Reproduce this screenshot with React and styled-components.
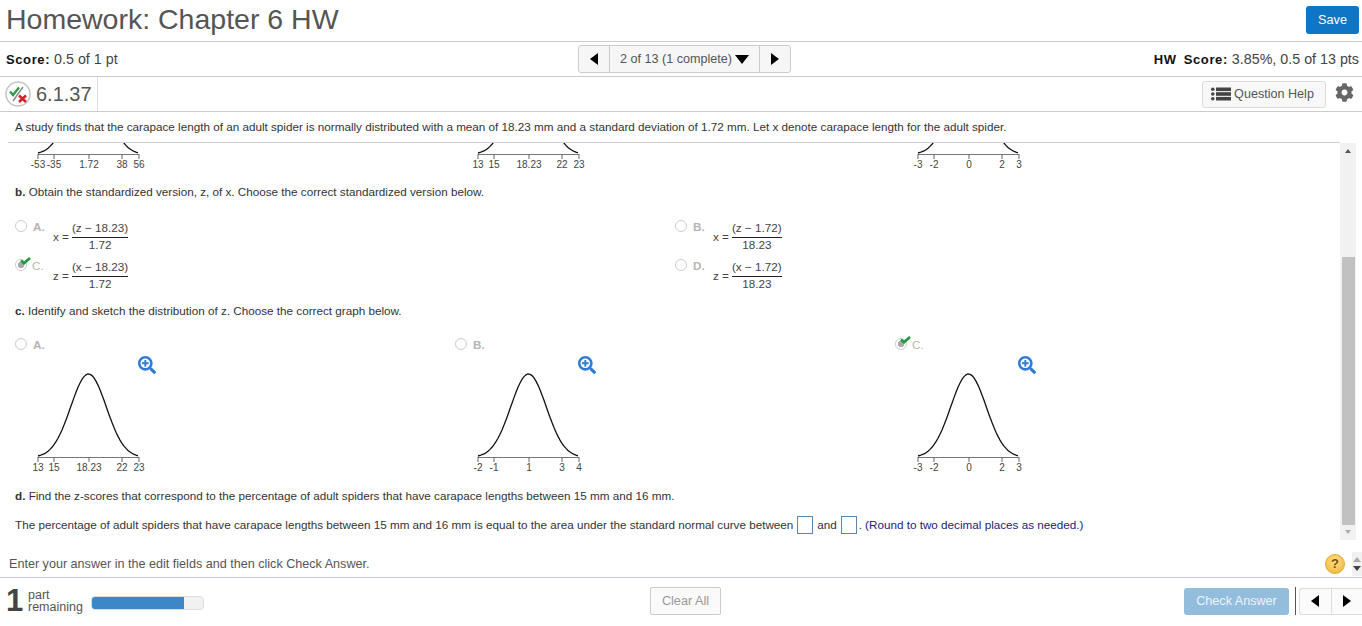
import React from "react";
import styled, { createGlobalStyle } from "styled-components";
import { FaCog, FaSearchPlus } from "react-icons/fa";

const GlobalStyle = createGlobalStyle`
    html, body {
        margin: 0;
        padding: 0;
        background: #fff;
    }
    body {
        font-family: "Liberation Sans", Arial, sans-serif;
        font-size: 11.7px;
        color: #333;
    }
    * {
        box-sizing: border-box;
    }
`;

const TICKS = [38, 54, 89, 122, 139];

// bell curve for the sketches, in page-like coordinates
const curvePath = () => {
    const points = [];
    for (let x = 38; x <= 139; x += 2) {
        const z = (x - 88.5) / 17.8;
        const y = 457.5 - 83.5 * Math.exp((-z * z) / 2);
        points.push(`${x} ${y.toFixed(1)}`);
    }
    return "M" + points.join(" L");
};

const Sketch = ({ labels }) => (
    <GraphSvg viewBox="30 368 122 106" width="122" height="106">
        <path d={curvePath()} fill="none" stroke="#111" strokeWidth="1.3" />
        <line x1="38" x2="139" y1="457.5" y2="457.5" stroke="#777" strokeWidth="1.2" />
        {TICKS.map((x, i) => (
            <g key={x}>
                <line x1={x} x2={x} y1="457" y2="462" stroke="#666" strokeWidth="1" />
                <text x={x} y="471" textAnchor="middle" fontSize="10" fill="#444">
                    {labels[i]}
                </text>
            </g>
        ))}
    </GraphSvg>
);

const Fraction = ({ name, top, bottom }) => (
    <Formula>
        <span>{name} =</span>
        <Frac>
            <Numerator>{top}</Numerator>
            <Denominator>{bottom}</Denominator>
        </Frac>
    </Formula>
);

const Choice = ({ letter, picked }) => (
    <ChoiceLabel>
        <Radio $picked={picked} />
        {picked && (
            <CheckMark viewBox="0 0 11 8" width="11" height="8">
                <path d="M1 3.5 L4 6.3 L10 1" fill="none" stroke="#1f9a3c" strokeWidth="2.6" />
            </CheckMark>
        )}
        <LetterText $picked={picked}>{letter}.</LetterText>
    </ChoiceLabel>
);

const QuestionStatus = () => (
    <svg viewBox="0 0 26 26" width="26" height="26">
        <circle cx="13" cy="13" r="12" fill="#fff" stroke="#c4c4c4" strokeWidth="1.5" />
        <line x1="8" y1="20" x2="18" y2="6" stroke="#888" strokeWidth="1.4" />
        <path d="M5 10.5 L8 14 L14 6.5" fill="none" stroke="#2f9e48" strokeWidth="2.4" />
        <path d="M14 14.5 L21 21 M21 14.5 L14 21" stroke="#d3222a" strokeWidth="2.6" />
    </svg>
);

const ListIcon = () => (
    <svg viewBox="0 0 20 14" width="20" height="14">
        <g fill="#444">
            <rect x="5" y="0.5" width="15" height="3.6" />
            <rect x="5" y="5.2" width="15" height="3.6" />
            <rect x="5" y="9.9" width="15" height="3.6" />
            <circle cx="1.8" cy="2.3" r="1.8" />
            <circle cx="1.8" cy="7" r="1.8" />
            <circle cx="1.8" cy="11.7" r="1.8" />
        </g>
    </svg>
);

const App = () => {
    return (
        <Page>
            <GlobalStyle />
            <TitleBar>
                <Title>Homework: Chapter 6 HW</Title>
                <SaveButton>Save</SaveButton>
            </TitleBar>

            <ScoreBar>
                <ScoreText>
                    <b>Score:</b> 0.5 of 1 pt
                </ScoreText>
                <Pager>
                    <PagerArrow>
                        <Arrow $dir="left" $size={6.5} />
                    </PagerArrow>
                    <PagerMiddle>
                        2 of 13 (1 complete)
                        <Arrow $dir="down" $size={7} />
                    </PagerMiddle>
                    <PagerArrow>
                        <Arrow $dir="right" $size={6.5} />
                    </PagerArrow>
                </Pager>
                <HwScore>
                    <b>HW Score:</b> 3.85%, 0.5 of 13 pts
                </HwScore>
            </ScoreBar>

            <QuestionBar>
                <QuestionId>
                    <QuestionStatus />
                    <QuestionNumber>6.1.37</QuestionNumber>
                </QuestionId>
                <HelpButton>
                    <ListIcon />
                    Question Help
                </HelpButton>
                <GearSlot>
                    <FaCog size={19} color="#666" />
                </GearSlot>
            </QuestionBar>

            <Prompt>
                A study finds that the carapace length of an adult spider is normally distributed with a mean of 18.23 mm and a standard deviation of 1.72 mm. Let x denote carapace length for the adult spider.
            </Prompt>

            <ScrollArea>
                <ScrollContent>
                    <GraphGrid>
                        <CroppedGraph>
                            <Sketch labels={["-53", "-35", "1.72", "38", "56"]} />
                        </CroppedGraph>
                        <CroppedGraph>
                            <Sketch labels={["13", "15", "18.23", "22", "23"]} />
                        </CroppedGraph>
                        <CroppedGraph>
                            <Sketch labels={["-3", "-2", "0", "2", "3"]} />
                        </CroppedGraph>
                    </GraphGrid>

                    <PartHeading $top={14}>
                        <b>b.</b> Obtain the standardized version, z, of x. Choose the correct standardized version below.
                    </PartHeading>

                    <FormulaGrid>
                        <FormulaOption>
                            <Choice letter="A" />
                            <Fraction name="x" top="(z − 18.23)" bottom="1.72" />
                        </FormulaOption>
                        <FormulaOption>
                            <Choice letter="B" />
                            <Fraction name="x" top="(z − 1.72)" bottom="18.23" />
                        </FormulaOption>
                        <FormulaOption>
                            <Choice letter="C" picked />
                            <Fraction name="z" top="(x − 18.23)" bottom="1.72" />
                        </FormulaOption>
                        <FormulaOption>
                            <Choice letter="D" />
                            <Fraction name="z" top="(x − 1.72)" bottom="18.23" />
                        </FormulaOption>
                    </FormulaGrid>

                    <PartHeading $top={6}>
                        <b>c.</b> Identify and sketch the distribution of z. Choose the correct graph below.
                    </PartHeading>

                    <GraphGrid $top={20}>
                        <GraphOption>
                            <Choice letter="A" />
                            <Sketch labels={["13", "15", "18.23", "22", "23"]} />
                            <ZoomButton><FaSearchPlus size={18} color="#2f7bd6" /></ZoomButton>
                        </GraphOption>
                        <GraphOption>
                            <Choice letter="B" />
                            <Sketch labels={["-2", "-1", "1", "3", "4"]} />
                            <ZoomButton><FaSearchPlus size={18} color="#2f7bd6" /></ZoomButton>
                        </GraphOption>
                        <GraphOption>
                            <Choice letter="C" picked />
                            <Sketch labels={["-3", "-2", "0", "2", "3"]} />
                            <ZoomButton><FaSearchPlus size={18} color="#2f7bd6" /></ZoomButton>
                        </GraphOption>
                    </GraphGrid>

                    <PartHeading $top={15}>
                        <b>d.</b> Find the z-scores that correspond to the percentage of adult spiders that have carapace lengths between 15 mm and 16 mm.
                    </PartHeading>

                    <AnswerLine>
                        The percentage of adult spiders that have carapace lengths between 15 mm and 16 mm is equal to the area under the standard normal curve between
                        <AnswerBox />
                        and
                        <AnswerBox />
                        <AnswerDot>.</AnswerDot>
                        <Hint>(Round to two decimal places as needed.)</Hint>
                    </AnswerLine>
                </ScrollContent>

                <Scrollbar>
                    <ScrollButton><Arrow $dir="up" $size={3.5} $color="#555" /></ScrollButton>
                    <ScrollThumb />
                    <ScrollButton><Arrow $dir="down" $size={3.5} $color="#aaa" /></ScrollButton>
                </Scrollbar>
            </ScrollArea>

            <InstructionBar>
                Enter your answer in the edit fields and then click Check Answer.
                <HelpTools>
                    <HelpBubble>?</HelpBubble>
                    <Spinner>
                        <Arrow $dir="up" $size={4} $color="#aaa" />
                        <Arrow $dir="down" $size={4} $color="#444" />
                    </Spinner>
                </HelpTools>
            </InstructionBar>

            <Footer>
                <Remaining>
                    <RemainingCount>1</RemainingCount>
                    <RemainingText>part<br />remaining</RemainingText>
                    <ProgressTrack>
                        <ProgressFill style={{ width: `${(94 / 113) * 100}%` }} />
                    </ProgressTrack>
                </Remaining>
                <ClearButton>Clear All</ClearButton>
                <FooterActions>
                    <CheckButton>Check Answer</CheckButton>
                    <FooterDivider />
                    <FooterPager>
                        <FooterArrow><Arrow $dir="left" $size={6.5} /></FooterArrow>
                        <FooterArrow><Arrow $dir="right" $size={6.5} /></FooterArrow>
                    </FooterPager>
                </FooterActions>
            </Footer>
        </Page>
    );
};

export default App;

const Page = styled.div`
    height: 100vh;
    display: flex;
    flex-direction: column;
    overflow: hidden;
`;

const TitleBar = styled.header`
    height: 42px;
    flex: none;
    display: flex;
    align-items: center;
    justify-content: space-between;
    padding: 0 3px 2px 6px;
    border-bottom: 1px solid #ccc;
`;

const Title = styled.h1`
    margin: 0;
    font-size: 28.5px;
    font-weight: 400;
    color: #555;
`;

const SaveButton = styled.button`
    width: 53px;
    height: 28px;
    border: none;
    border-radius: 3px;
    background: #0f76c6;
    color: #fff;
    font: 12.7px "Liberation Sans", Arial, sans-serif;
`;

const ScoreBar = styled.div`
    height: 35px;
    flex: none;
    display: grid;
    grid-template-columns: 572px 213px 1fr;
    align-items: center;
    padding: 0 3px 0 6px;
    border-bottom: 1px solid #ccc;
`;

const ScoreText = styled.div`
    font-size: 14.3px;
    color: #444;

    b {
        font-size: 13px;
        color: #111;
        letter-spacing: 0.6px;
        word-spacing: 3px;
    }
`;

const HwScore = styled(ScoreText)`
    text-align: right;
`;

const Pager = styled.div`
    height: 28px;
    display: flex;
    border: 1px solid #ccc;
    border-radius: 3px;
    background: #f6f6f6;
`;

const PagerArrow = styled.div`
    width: 30px;
    display: flex;
    align-items: center;
    justify-content: center;
`;

const PagerMiddle = styled.div`
    flex: 1;
    display: flex;
    align-items: center;
    justify-content: center;
    gap: 3px;
    color: #555;
    font-size: 12.6px;
    border-left: 1px solid #ccc;
    border-right: 1px solid #ccc;
`;

const arrowBorders = ({ $dir, $size = 5.5, $color = "#000" }) => {
    const long = `${$size * 1.35}px solid ${$color}`;
    const side = `${$size}px solid transparent`;
    if ($dir === "left") return `border-right: ${long}; border-top: ${side}; border-bottom: ${side};`;
    if ($dir === "right") return `border-left: ${long}; border-top: ${side}; border-bottom: ${side};`;
    if ($dir === "up") return `border-bottom: ${long}; border-left: ${side}; border-right: ${side};`;
    return `border-top: ${long}; border-left: ${side}; border-right: ${side};`;
};

const Arrow = styled.span`
    display: inline-block;
    width: 0;
    height: 0;
    ${arrowBorders}
`;

const QuestionBar = styled.div`
    height: 35px;
    flex: none;
    display: flex;
    align-items: center;
    padding-left: 5px;
    border-bottom: 1px solid #ccc;
`;

const QuestionId = styled.div`
    height: 100%;
    display: flex;
    align-items: center;
    gap: 5px;
    padding-right: 5px;
    margin-right: auto;
    border-right: 1px solid #ddd;
`;

const QuestionNumber = styled.span`
    font-size: 20px;
    color: #555;
`;

const HelpButton = styled.button`
    width: 124px;
    height: 27px;
    display: flex;
    align-items: center;
    justify-content: center;
    gap: 3px;
    padding: 0 3px 0 0;
    border: 1px solid #ddd;
    border-radius: 3px;
    background: #f8f8f8;
    color: #555;
    font: 12.6px "Liberation Sans", Arial, sans-serif;
`;

const GearSlot = styled.div`
    width: 36px;
    display: flex;
    justify-content: center;
    margin-bottom: 3px;
`;

const Prompt = styled.div`
    height: 31px;
    flex: none;
    display: flex;
    align-items: center;
    margin: 0 22px 0 8px;
    padding: 0 0 2px 7px;
    border-bottom: 1px solid #ccd;
    color: #333;
`;

const ScrollArea = styled.main`
    flex: 1;
    min-height: 0;
    display: flex;
    overflow: hidden;
`;

const ScrollContent = styled.div`
    flex: 1;
    min-width: 0;
    padding-left: 15px;
`;

const GraphGrid = styled.div`
    display: grid;
    grid-template-columns: repeat(3, 440px);
    margin-top: ${(p) => p.$top || 0}px;
`;

const GraphSvg = styled.svg`
    display: block;
    flex: none;
    margin-left: 15px;
`;

const CroppedGraph = styled.div`
    height: 28px;
    display: flex;
    align-items: flex-end;
    overflow: hidden;
`;

const GraphOption = styled.div`
    position: relative;
    height: 136px;
    display: flex;
    flex-direction: column;
    justify-content: space-between;
`;

const ZoomButton = styled.span`
    position: absolute;
    left: 123px;
    top: 18px;
    display: flex;
`;

const PartHeading = styled.p`
    margin: ${(p) => p.$top}px 0 0;
    line-height: 14px;
    color: #333;
`;

const FormulaGrid = styled.div`
    display: grid;
    grid-template-columns: repeat(2, 660px);
    grid-auto-rows: 39px;
    margin-top: 21px;
`;

const FormulaOption = styled.div`
    display: flex;
    align-items: flex-start;
`;

const ChoiceLabel = styled.label`
    position: relative;
    width: 38px;
    height: 12px;
    flex: none;
    display: flex;
    align-items: center;
    gap: 6px;
`;

const Radio = styled.span`
    width: 12px;
    height: 12px;
    flex: none;
    border-radius: 50%;
    border: 1px solid #ccc;
    background: ${(p) => (p.$picked ? "radial-gradient(circle, #aaa 0 3px, #fff 3.5px)" : "#fff")};
`;

const CheckMark = styled.svg`
    position: absolute;
    left: 5px;
    top: -2px;
`;

const LetterText = styled.span`
    color: #b5b5b5;
    font-weight: ${(p) => (p.$picked ? 400 : 700)};
    margin-left: ${(p) => (p.$picked ? -1 : 0)}px;
`;

const Formula = styled.div`
    display: flex;
    align-items: center;
    gap: 3px;
    color: #444;
    white-space: nowrap;
`;

const Frac = styled.div`
    text-align: center;
`;

const Numerator = styled.div`
    line-height: 16px;
    border-bottom: 1px solid #222;
    padding: 0 0 1px;
`;

const Denominator = styled.div`
    line-height: 14px;
`;

const AnswerLine = styled.div`
    margin-top: 12px;
    height: 18px;
    display: flex;
    align-items: center;
    color: #333;
`;

const AnswerBox = styled.span`
    width: 16px;
    height: 18px;
    margin: 2px 4px 0;
    border: 1px solid #5b86ad;
    background: #fff;
`;

const AnswerDot = styled.span`
    margin-left: -2px;
`;

const Hint = styled.span`
    margin-left: 3px;
    color: #22227a;
`;

const Scrollbar = styled.aside`
    width: 16px;
    flex: none;
    margin: 0 6px 5px 0;
    display: flex;
    flex-direction: column;
    align-items: center;
    background: #f1f1f1;
`;

const ScrollButton = styled.div`
    height: 16px;
    width: 100%;
    flex: none;
    display: flex;
    align-items: center;
    justify-content: center;
`;

const ScrollThumb = styled.div`
    width: 13px;
    height: 268px;
    flex: none;
    margin-top: 98px;
    margin-bottom: -1px;
    background: #c1c1c1;
`;

const InstructionBar = styled.div`
    height: 33px;
    flex: none;
    display: flex;
    align-items: center;
    justify-content: space-between;
    padding: 5px 0 0 9px;
    border-bottom: 1px solid #c8c8d4;
    color: #555;
    font-size: 12.6px;
`;

const HelpTools = styled.div`
    display: flex;
    align-items: center;
    gap: 7px;
`;

const HelpBubble = styled.div`
    width: 20px;
    height: 20px;
    border-radius: 50%;
    display: flex;
    align-items: center;
    justify-content: center;
    background: radial-gradient(circle at 50% 35%, #fde08a, #f0b030);
    border: 1px solid #e3a93a;
    color: #7a5200;
    font-size: 13px;
    font-weight: 700;
`;

const Spinner = styled.div`
    width: 10px;
    height: 24px;
    display: flex;
    flex-direction: column;
    align-items: center;
    justify-content: center;
    gap: 4px;
    background: #f1f1f1;
`;

const Footer = styled.footer`
    height: 48px;
    flex: none;
    display: grid;
    grid-template-columns: 650px 71px 1fr;
    align-items: center;
    padding-bottom: 2px;
`;

const Remaining = styled.div`
    display: flex;
    align-items: center;
    padding-left: 6px;
`;

const RemainingCount = styled.span`
    width: 22px;
    font-size: 31px;
    font-weight: 700;
    color: #444;
`;

const RemainingText = styled.span`
    width: 63px;
    line-height: 12px;
    color: #555;
    font-size: 12.5px;
`;

const ProgressTrack = styled.div`
    width: 113px;
    height: 14px;
    margin-top: 4px;
    border-radius: 4px;
    background: #f1f1f1;
    border: 1px solid #ddd;
    overflow: hidden;
`;

const ProgressFill = styled.div`
    height: 100%;
    background: #3d87c9;
`;

const ClearButton = styled.button`
    height: 28px;
    padding: 0;
    border: 1px solid #ccc;
    border-radius: 2px;
    background: #fafafa;
    color: #999;
    font: 12.7px "Liberation Sans", Arial, sans-serif;
`;

const FooterActions = styled.div`
    display: flex;
    align-items: center;
    justify-content: flex-end;
`;

const CheckButton = styled.button`
    width: 105px;
    height: 27px;
    padding: 0;
    border: none;
    border-radius: 3px;
    background: #93bddc;
    color: #eef4f9;
    font: 12.6px "Liberation Sans", Arial, sans-serif;
`;

const FooterDivider = styled.span`
    width: 1px;
    height: 28px;
    margin: 0 3px 0 6px;
    background: #555;
`;

const FooterPager = styled.div`
    width: 63px;
    height: 27px;
    display: flex;
    border: 1px solid #ddd;
    border-right: none;
    border-radius: 3px 0 0 3px;
    background: #fbfbfb;
`;

const FooterArrow = styled.div`
    flex: 1;
    display: flex;
    align-items: center;
    justify-content: center;

    & + & {
        border-left: 1px solid #ddd;
    }
`;
